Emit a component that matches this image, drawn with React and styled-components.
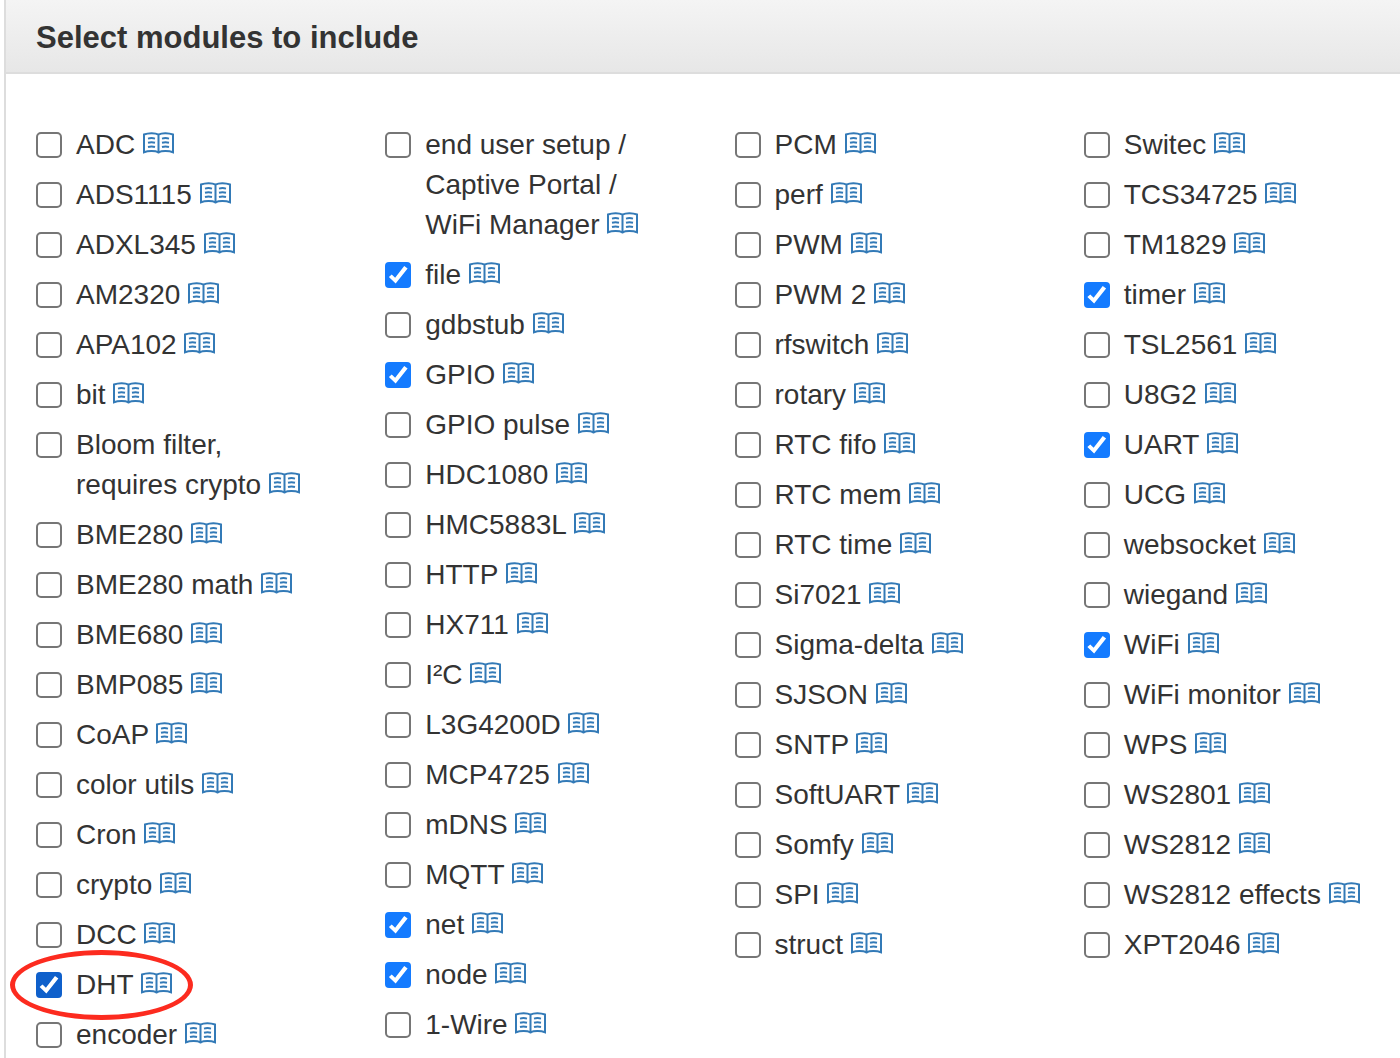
import React, { useState } from 'react';
import styled, { createGlobalStyle } from 'styled-components';

const columns = [
    [
        'ADC', 'ADS1115', 'ADXL345', 'AM2320', 'APA102', 'bit', 'Bloom filter, requires crypto', 'BME280',
        'BME280 math', 'BME680', 'BMP085', 'CoAP', 'color utils', 'Cron', 'crypto', 'DCC', 'DHT', 'encoder',
    ],
    [
        'end user setup / Captive Portal / WiFi Manager', 'file', 'gdbstub', 'GPIO', 'GPIO pulse', 'HDC1080',
        'HMC5883L', 'HTTP', 'HX711', 'I²C', 'L3G4200D', 'MCP4725', 'mDNS', 'MQTT', 'net', 'node', '1-Wire',
    ],
    [
        'PCM', 'perf', 'PWM', 'PWM 2', 'rfswitch', 'rotary', 'RTC fifo', 'RTC mem', 'RTC time', 'Si7021',
        'Sigma-delta', 'SJSON', 'SNTP', 'SoftUART', 'Somfy', 'SPI', 'struct',
    ],
    [
        'Switec', 'TCS34725', 'TM1829', 'timer', 'TSL2561', 'U8G2', 'UART', 'UCG', 'websocket', 'wiegand',
        'WiFi', 'WiFi monitor', 'WPS', 'WS2801', 'WS2812', 'WS2812 effects', 'XPT2046',
    ],
];

const defaultModules = ['DHT', 'file', 'GPIO', 'net', 'node', 'timer', 'UART', 'WiFi'];
const highlighted = 'DHT';

const toId = (name) => 'module-' + name.toLowerCase().replace(/[^a-z0-9]+/g, '-');

function BookIcon() {
    return (
        <BookSvg viewBox="0 0 31 22" aria-hidden="true">
            <path d="M1 2.500C5 .9 12 .5 15.500 2.600C19 .5 26 .9 30 2.500V20.300C26 18.800 19 18.600 15.500 20.300C12 18.600 5 18.800 1 20.300ZM15.500 2.600V21.500" />
            <path d="M5 6.600Q8.500 5.600 12 6.600M5 10.800Q8.500 9.800 12 10.800M5 15Q8.500 14 12 15M19 6.600Q22.500 5.600 26 6.600M19 10.800Q22.500 9.800 26 10.800M19 15Q22.500 14 26 15" />
        </BookSvg>
    );
}

function Module({ name, checked, onToggle }) {
    const id = toId(name);

    return (
        <ModuleRow>
            <Checkbox
                type="checkbox"
                id={id}
                checked={checked}
                $active={name === highlighted}
                onChange={() => onToggle(name)}
            />
            <ModuleText>
                <label htmlFor={id}>{name}</label>{' '}
                <DocLink href={'#' + id} aria-label={name + ' documentation'}>
                    <BookIcon />
                </DocLink>
            </ModuleText>
            {name === highlighted && <Marker />}
        </ModuleRow>
    );
}

function App() {
    const [selected, setSelected] = useState(defaultModules);

    const toggle = (name) => {
        setSelected(selected.includes(name) ? selected.filter((item) => item !== name) : [...selected, name]);
    };

    return (
        <>
            <GlobalStyle />
            <Panel>
                <PanelHeading>
                    <h3>Select modules to include</h3>
                </PanelHeading>
                <PanelBody>
                    {columns.map((modules) => (
                        <ModuleList key={modules[0]}>
                            {modules.map((name) => (
                                <Module key={name} name={name} checked={selected.includes(name)} onToggle={toggle} />
                            ))}
                        </ModuleList>
                    ))}
                </PanelBody>
            </Panel>
        </>
    );
}

const GlobalStyle = createGlobalStyle`
    * {
        box-sizing: border-box;
    }

    body {
        margin: 0;
        background: #fff;
        color: #333;
        font-family: "Helvetica Neue", "Liberation Sans", Arial, sans-serif;
        font-size: 28px;
        line-height: 40px;
    }
`;

const Panel = styled.section`
    min-height: 100vh;
    margin-left: 4px;
    border-left: 2px solid #ddd;
`;

const PanelHeading = styled.header`
    padding: 18px 30px 14px;
    border-bottom: 2px solid #ddd;
    background: linear-gradient(to bottom, #f4f4f4, #e7e7e7);

    h3 {
        margin: 0;
        font-size: 31px;
        font-weight: bold;
        line-height: 40px;
    }
`;

const PanelBody = styled.div`
    display: grid;
    grid-template-columns: repeat(4, 1fr);
    column-gap: 60px;
    padding: 51px 27px 0 30px;
`;

const ModuleList = styled.ul`
    display: flex;
    flex-direction: column;
    gap: 10px;
    margin: 0;
    padding: 0;
    list-style: none;
`;

const ModuleRow = styled.li`
    position: relative;
    display: flex;
    align-items: flex-start;
    gap: 14px;
`;

const Checkbox = styled.input`
    appearance: none;
    flex: none;
    width: 26px;
    height: 26px;
    margin: 7px 0 0;
    border: 2px solid #767676;
    border-radius: 5px;
    background: #fff;

    &:checked {
        border: 0;
        border-radius: 4px;
        background: ${(props) => (props.$active ? '#0f60cb' : '#147bff')};
    }

    &:checked::before {
        content: '';
        display: block;
        height: 100%;
        background: #fff;
        clip-path: polygon(14% 58%, 25% 48%, 38% 61%, 73% 15%, 86% 25%, 40% 83%);
    }
`;

const ModuleText = styled.div`
    min-width: 0;
`;

const DocLink = styled.a`
    color: #337ab7;
    white-space: nowrap;
`;

const BookSvg = styled.svg`
    width: 31px;
    height: 22px;
    fill: none;
    stroke: currentColor;
    stroke-width: 2;
`;

/* red ellipse drawn over the row */
const Marker = styled.span`
    position: absolute;
    top: -15px;
    left: -26px;
    width: 183px;
    height: 70px;
    border: 5px solid #fc2b1f;
    border-radius: 50%;
    pointer-events: none;
`;

export default App;
